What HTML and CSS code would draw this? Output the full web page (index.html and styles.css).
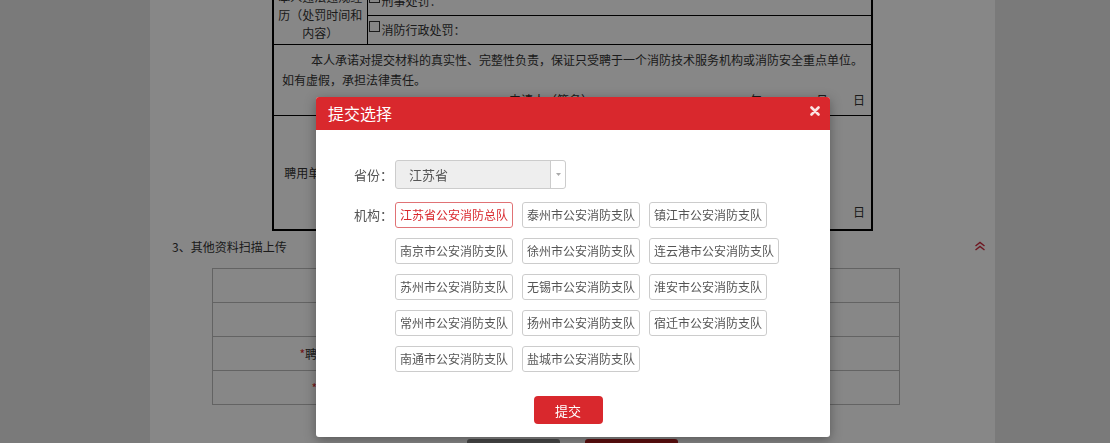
FILE: index.html
```html
<!DOCTYPE html>
<html lang="zh-CN">
<head>
    <meta charset="UTF-8">
    <meta name="viewport" content="width=device-width, initial-scale=1.0">
    <title>提交选择</title>
    <link rel="stylesheet" href="styles.css">
</head>
<body>
    <div class="main">
        <table class="form-table">
            <tr class="row-a">
                <td class="cell-label" rowspan="2">本人违法违规经历（处罚时间和内容）</td>
                <td class="cell-value"><span class="check"></span>刑事处罚：</td>
            </tr>
            <tr class="row-b">
                <td class="cell-value"><span class="check"></span>消防行政处罚：</td>
            </tr>
            <tr class="row-c">
                <td class="cell-pledge" colspan="2">
                    <p class="pledge-text">本人承诺对提交材料的真实性、完整性负责，保证只受聘于一个消防技术服务机构或消防安全重点单位。<br>如有虚假，承担法律责任。</p>
                    <p class="sign">申请人（签名）：<span class="sign-y">年</span><span class="sign-m">月</span><span class="sign-d">日</span></p>
                </td>
            </tr>
            <tr class="row-d">
                <td class="cell-label">聘用单位意见</td>
                <td class="cell-opinion">
                    <p class="sign"><span class="sign-d">日</span></p>
                </td>
            </tr>
        </table>

        <div class="section-title">
            <span>3、其他资料扫描上传</span>
            <svg class="fold" width="12" height="10" viewBox="0 0 12 10">
                <path d="M1.5 5 L6 1.5 L10.5 5 M1.5 9 L6 5.5 L10.5 9" fill="none" stroke="#cf2a3e" stroke-width="1.4"/>
            </svg>
        </div>

        <table class="upload-table">
            <tr><td class="up-label">学历证书</td><td class="up-file"></td></tr>
            <tr><td class="up-label">职称证书</td><td class="up-file"></td></tr>
            <tr><td class="up-label"><i>*</i>聘用单位劳动合同</td><td class="up-file"></td></tr>
            <tr><td class="up-label"><i>*</i>身份证明扫描件</td><td class="up-file"></td></tr>
        </table>

        <div class="page-actions">
            <button class="btn-back">返回</button>
            <button class="btn-save">保存</button>
        </div>
    </div>

    <div class="mask"></div>

    <div class="dialog">
        <div class="dialog-head">
            <span class="dialog-title">提交选择</span>
            <svg class="dialog-close" width="10" height="10" viewBox="0 0 10 10">
                <path d="M1.5 1.5 L8.5 8.5 M8.5 1.5 L1.5 8.5" stroke="#fbe3e3" stroke-width="2.6" stroke-linecap="round"/>
            </svg>
        </div>
        <div class="dialog-body">
            <div class="field">
                <label class="field-label">省份：</label>
                <div class="select">
                    <span class="select-text">江苏省</span>
                    <span class="select-arrow">
                        <svg width="5" height="3" viewBox="0 0 5 3"><path d="M0 0 L5 0 L2.5 3 Z" fill="#aaa"/></svg>
                    </span>
                </div>
            </div>
            <div class="field field-org">
                <label class="field-label">机构：</label>
                <div class="org-list">
                    <span class="org active">江苏省公安消防总队</span>
                    <span class="org">泰州市公安消防支队</span>
                    <span class="org">镇江市公安消防支队</span>
                    <span class="org">南京市公安消防支队</span>
                    <span class="org">徐州市公安消防支队</span>
                    <span class="org">连云港市公安消防支队</span>
                    <span class="org">苏州市公安消防支队</span>
                    <span class="org">无锡市公安消防支队</span>
                    <span class="org">淮安市公安消防支队</span>
                    <span class="org">常州市公安消防支队</span>
                    <span class="org">扬州市公安消防支队</span>
                    <span class="org">宿迁市公安消防支队</span>
                    <span class="org">南通市公安消防支队</span>
                    <span class="org">盐城市公安消防支队</span>
                </div>
            </div>
            <div class="dialog-foot">
                <button class="btn-submit">提交</button>
            </div>
        </div>
    </div>
</body>
</html>
```

FILE: styles.css
```css
html, body {
    height: 100%;
}

body {
    margin: 0;
    overflow: hidden;
    background-color: #e6e6e6;
    font-family: "Noto Sans CJK SC", "Liberation Sans", sans-serif;
    font-size: 12px;
    color: #333;
}

p {
    margin: 0;
}

/* page underneath the mask */
.main {
    width: 845px;
    height: 480px;
    margin: -16px 0 0 150px;
    background-color: #fff;
}

.form-table {
    width: 601px;
    margin: 0 auto;
    border-collapse: collapse;
    border: 2px solid #000;
}

.form-table td {
    border: 1px solid #000;
    padding: 0;
    line-height: 18px;
}

.cell-label {
    width: 94px;
    padding: 0 3px !important;
    text-align: center;
    vertical-align: middle;
    box-sizing: border-box;
}

.cell-value {
    padding-left: 1px !important;
}

.row-a td.cell-value {
    height: 29px;
}

.row-b td {
    height: 28px;
}

.check {
    display: inline-block;
    width: 9px;
    height: 9px;
    border: 1px solid #333;
    margin-right: 2px;
    vertical-align: 3px;
}

.cell-pledge {
    height: 69px;
    padding: 5px 6px 5px 8px !important;
    vertical-align: top;
    box-sizing: border-box;
}

.pledge-text {
    line-height: 20px;
    text-indent: 29px;
}

.sign {
    line-height: 20px;
    text-align: right;
}

.sign-y {
    margin-left: 151px;
}

.sign-m {
    margin-left: 54px;
}

.sign-d {
    margin-left: 25px;
}

.row-d td {
    height: 106px;
}

.cell-opinion {
    padding: 0 6px 7px 0 !important;
    vertical-align: bottom;
}

.section-title {
    display: flex;
    justify-content: space-between;
    align-items: center;
    margin-top: 8px;
    padding: 0 9px 0 22px;
    line-height: 16px;
}

.fold {
    margin-top: -3px;
}

.upload-table {
    width: 688px;
    margin: 13px 0 0 62px;
    border-collapse: collapse;
}

.upload-table td {
    height: 33px;
    border: 1px solid #bbb;
    padding: 0;
}

.up-label {
    width: 188px;
    padding-right: 10px !important;
    text-align: right;
}

.up-label i {
    font-style: normal;
    color: #d9282d;
}

.page-actions {
    display: flex;
    justify-content: center;
    gap: 25px;
    margin-top: 34px;
}

.page-actions button {
    width: 93px;
    height: 32px;
    border: none;
    border-radius: 3px;
    color: #fff;
    font-family: inherit;
    font-size: 13px;
}

.btn-back {
    background-color: #868686;
}

.btn-save {
    background-color: #b01e1e;
}

.mask {
    position: fixed;
    top: 0;
    left: 0;
    right: 0;
    bottom: 0;
    background-color: rgba(0, 0, 0, 0.47);
}

/* dialog */
.dialog {
    position: absolute;
    top: 97px;
    left: 316px;
    width: 514px;
    background-color: #fff;
    border-radius: 3px;
    box-shadow: 0 3px 12px rgba(0, 0, 0, 0.35);
    overflow: hidden;
}

.dialog-head {
    display: flex;
    justify-content: space-between;
    align-items: center;
    height: 33px;
    padding: 0 10px 0 12px;
    background-color: #d9282d;
}

.dialog-title {
    color: #fff;
    font-size: 16px;
    line-height: 33px;
}

.dialog-close {
    margin-bottom: 5px;
}

.dialog-body {
    padding: 30px 10px 13px 0;
}

.field {
    display: flex;
    align-items: center;
}

.field-org {
    align-items: flex-start;
    margin-top: 13px;
}

.field-label {
    width: 77px;
    margin-right: 2px;
    text-align: right;
    font-size: 13px;
    line-height: 26px;
    color: #555;
}

.select {
    display: flex;
    width: 171px;
    height: 29px;
    box-sizing: border-box;
    border: 1px solid #ccc;
    border-radius: 3px;
    background-color: #eee;
}

.select-text {
    flex: 1;
    padding-left: 13px;
    font-size: 13px;
    line-height: 27px;
    color: #555;
}

.select-arrow {
    display: flex;
    align-items: center;
    justify-content: center;
    width: 14px;
    border-left: 1px solid #ccc;
    border-radius: 0 3px 3px 0;
    background-color: #fff;
}

.org-list {
    flex: 1;
    display: flex;
    flex-wrap: wrap;
    gap: 10px 9px;
}

.org {
    height: 26px;
    box-sizing: border-box;
    padding: 0 4px;
    border: 1px solid #ccc;
    border-radius: 3px;
    font-size: 12px;
    line-height: 24px;
    color: #555;
    white-space: nowrap;
}

.org.active {
    border-color: #e07275;
    color: #d9282d;
}

.dialog-foot {
    display: flex;
    justify-content: center;
    margin-top: 24px;
}

.btn-submit {
    width: 69px;
    height: 28px;
    border: none;
    border-radius: 4px;
    background-color: #d9282d;
    color: #fff;
    font-family: inherit;
    font-size: 13px;
}
```
